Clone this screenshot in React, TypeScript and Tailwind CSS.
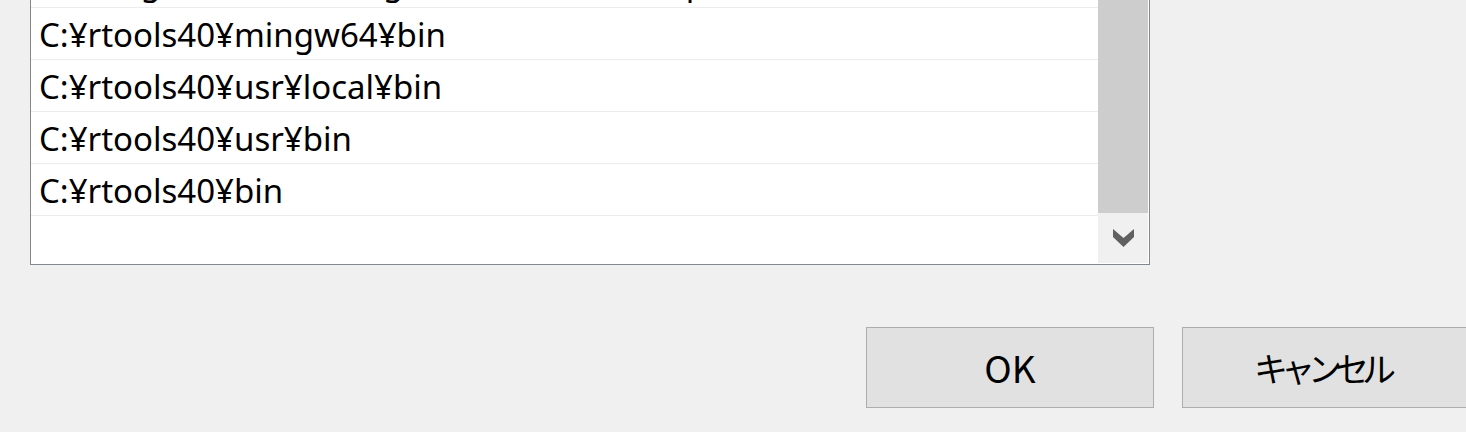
import React from "react";

const paths = [
  "C:¥Program Files¥Google¥Chrome¥Backup",
  "C:¥rtools40¥mingw64¥bin",
  "C:¥rtools40¥usr¥local¥bin",
  "C:¥rtools40¥usr¥bin",
  "C:¥rtools40¥bin",
];

export default function App() {
  return (
    <div
      className="w-[1466px] h-[432px] overflow-hidden bg-[#f0f0f0]"
      style={{ fontFamily: '"Noto Sans", "Noto Sans CJK JP", sans-serif' }}
    >
      {/* list box, top edge scrolled off the window */}
      <div className="ml-[30px] w-[1120px] h-[265px] border-x border-b border-[#828790] bg-white pr-px pb-px flex">
        <div className="flex-1 overflow-hidden">
          <div className="-mt-[44px]">
            {paths.map((p) => (
              <div
                key={p}
                className="h-[52px] border-b border-[#ececec] pl-[8px] pt-[7px] text-[33px] leading-[40px] text-black whitespace-nowrap"
              >
                {p}
              </div>
            ))}
          </div>
        </div>

        {/* scrollbar */}
        <div className="w-[50px] flex flex-col">
          <div className="flex-1 bg-[#cdcdcd]"></div>
          <div className="h-[50px] bg-[#f0f0f0] flex items-center justify-center">
            <svg width="21" height="18" viewBox="0 0 21 18">
              <polygon points="0,0 10.5,9 21,0 21,8 10.5,18 0,8" fill="#606060" />
            </svg>
          </div>
        </div>
      </div>

      {/* buttons */}
      <div
        className="mt-[62px] pl-[866px] flex gap-[28px]"
        style={{ fontFamily: '"Noto Sans CJK JP", sans-serif' }}
      >
        <button className="w-[288px] h-[81px] shrink-0 bg-[#e1e1e1] border border-[#adadad] text-[37px] leading-none text-black">
          OK
        </button>
        <button className="w-[288px] h-[81px] shrink-0 bg-[#e1e1e1] border border-[#adadad] pr-[9px] text-[34px] leading-none tracking-[-7px] text-black">
          キャンセル
        </button>
      </div>
    </div>
  );
}
